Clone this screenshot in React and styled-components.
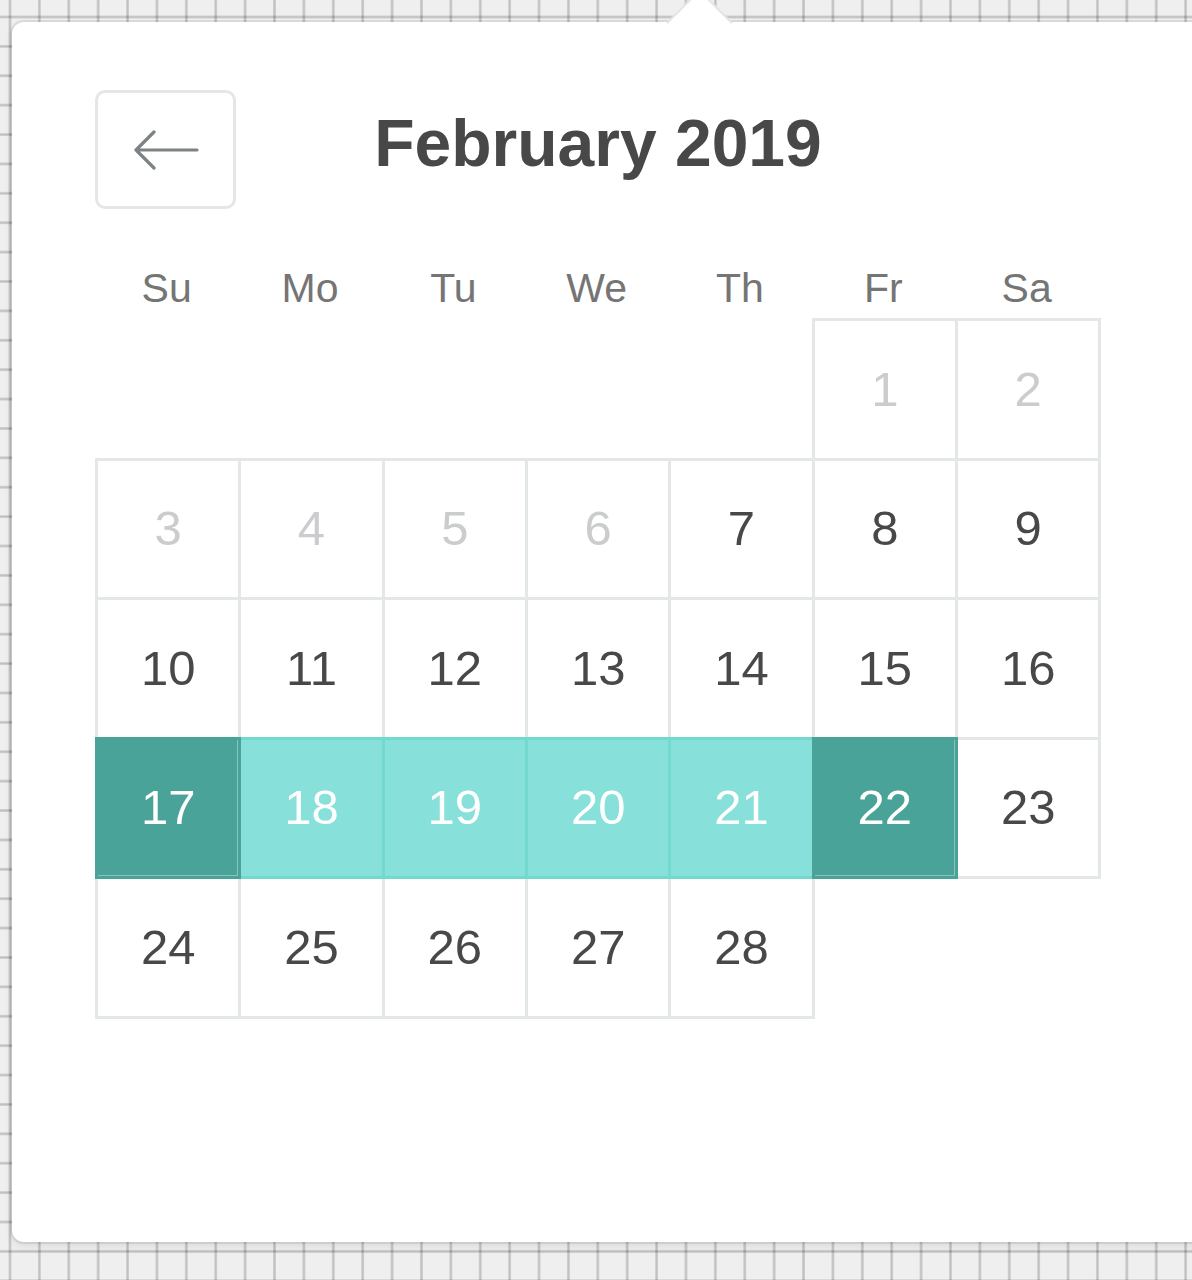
import React from "react";
import styled, { createGlobalStyle, css } from "styled-components";

const GlobalStyle = createGlobalStyle`
  html, body {
    margin: 0;
    padding: 0;
    overflow: hidden;
    height: 100%;
  }
  body {
    font-family: "Liberation Sans", Arial, Helvetica, sans-serif;
    background-color: #efefef;
    background-image:
      linear-gradient(to right, rgba(0,0,0,0.08) 0, rgba(0,0,0,0.2) 1px, rgba(0,0,0,0.2) 2px, rgba(0,0,0,0.08) 3px, transparent 3px),
      linear-gradient(to bottom, rgba(0,0,0,0.08) 0, rgba(0,0,0,0.2) 1px, rgba(0,0,0,0.2) 2px, rgba(0,0,0,0.08) 3px, transparent 3px);
    background-size: 29.4px 29.4px;
    background-position: 8.5px 15.5px;
  }
`;

const Page = styled.div`
  padding: 22px 0 0 12px;
`;

const Card = styled.div`
  position: relative;
  width: 1210px;
  height: 1220px;
  box-sizing: border-box;
  background: #fff;
  border-radius: 12px;
  box-shadow: 0 0 0 2px rgba(0, 0, 0, 0.08), 0 4px 10px rgba(0, 0, 0, 0.09);
  padding: 68px 0 0 83px;
`;

const Caret = styled.div`
  position: absolute;
  left: 664px;
  top: -23.5px;
  width: 47px;
  height: 47px;
  box-sizing: border-box;
  background: #fff;
  border-top: 2px solid rgba(0, 0, 0, 0.1);
  border-left: 2px solid rgba(0, 0, 0, 0.1);
  transform: rotate(45deg);
`;

const Month = styled.div`
  width: 1006px;
`;

const Header = styled.div`
  display: grid;
  grid-template-columns: 141px 1fr 141px;
  align-items: start;
  height: 119px;
`;

const NavButton = styled.button`
  width: 141px;
  height: 119px;
  box-sizing: border-box;
  border: 3px solid #e4e7e7;
  border-radius: 10px;
  background: #fff;
  display: flex;
  align-items: center;
  justify-content: center;
  padding: 0;
  cursor: pointer;
`;

const Title = styled.h2`
  margin: 20px 0 0;
  text-align: center;
  font-family: "Liberation Sans", Arial, Helvetica, sans-serif;
  font-weight: 700;
  font-size: 66px;
  line-height: 1;
  color: #484848;
`;

const WeekRow = styled.div`
  display: grid;
  grid-template-columns: repeat(7, 143.333px);
  margin: 59px 0 9px;
  height: 41px;
`;

const WeekDay = styled.div`
  text-align: center;
  font-size: 41px;
  line-height: 1;
  color: #757575;
`;

const Grid = styled.div`
  display: grid;
  grid-template-columns: repeat(7, 143.333px);
  grid-auto-rows: 139.5px;
`;

const variants = {
  blocked: css`
    color: #cacccd;
    border-color: #e4e7e7;
    background: #fff;
  `,
  normal: css`
    color: #484848;
    border-color: #e4e7e7;
    background: #fff;
  `,
  span: css`
    color: #fff;
    border-color: #72d9cf;
    background: #87e0d9;
    z-index: 1;
  `,
  selected: css`
    color: #fff;
    border-color: #4aa398;
    background: #4aa398;
    z-index: 2;
    box-shadow: inset -2px -2px 0 -1px rgba(255, 255, 255, 0.35);
  `,
};

const Day = styled.div`
  position: relative;
  width: calc(100% + 3px);
  height: calc(100% + 3px);
  box-sizing: border-box;
  border: 3px solid #e4e7e7;
  display: flex;
  align-items: center;
  justify-content: center;
  font-size: 49px;
  line-height: 1;
  ${(p) => variants[p.$variant]}
`;

const Empty = styled.div``;

const weekdays = ["Su", "Mo", "Tu", "We", "Th", "Fr", "Sa"];

function variantFor(d) {
  if (d <= 6) return "blocked";
  if (d === 17 || d === 22) return "selected";
  if (d > 17 && d < 22) return "span";
  return "normal";
}

function ArrowLeft() {
  return (
    <svg width="66" height="40" viewBox="0 0 66 40" fill="none">
      <path
        d="M3 20 H64 M21 2 L3 20 L21 38"
        stroke="#7d8385"
        strokeWidth="3.2"
        strokeLinecap="round"
        strokeLinejoin="round"
      />
    </svg>
  );
}

export default function App() {
  const cells = [];
  for (let i = 0; i < 5; i++) cells.push(<Empty key={"e" + i} />);
  for (let d = 1; d <= 28; d++) {
    cells.push(
      <Day key={d} $variant={variantFor(d)}>
        {d}
      </Day>
    );
  }
  return (
    <>
      <GlobalStyle />
      <Page>
        <Card>
          <Caret />
          <Month>
            <Header>
              <NavButton aria-label="Previous month">
                <ArrowLeft />
              </NavButton>
              <Title>February 2019</Title>
              <span />
            </Header>
            <WeekRow>
              {weekdays.map((w) => (
                <WeekDay key={w}>{w}</WeekDay>
              ))}
            </WeekRow>
            <Grid>{cells}</Grid>
          </Month>
        </Card>
      </Page>
    </>
  );
}
